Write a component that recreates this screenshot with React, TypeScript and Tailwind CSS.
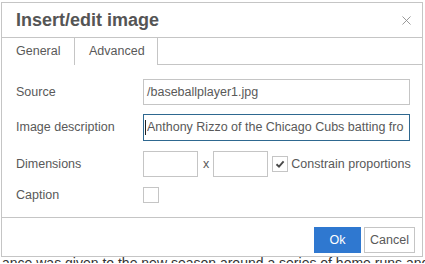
import { X } from "lucide-react";

const labelCls = "w-[127px] shrink-0 text-[12.5px] text-[#595959]";

function CheckBox({ checked }: { checked?: boolean }) {
  return (
    <div className="flex h-[16px] w-[16px] shrink-0 items-center justify-center border border-[#c5c5c5] bg-white">
      {checked && (
        <svg width="10" height="10" viewBox="0 0 10 10">
          <path d="M1.5 5.2 L4 7.6 L8.6 2.4" fill="none" stroke="#4a4a4a" strokeWidth="1.9" />
        </svg>
      )}
    </div>
  );
}

export default function App() {
  return (
    <div className="h-[264px] w-[425px] overflow-hidden bg-white font-['Liberation_Sans',Arial,sans-serif]">
      <div className="ml-[1px] mt-[2px] w-[422px] border border-[#c5c5c5] bg-white">
        {/* header */}
        <div className="flex h-[35px] items-center justify-between border-b border-[#c5c5c5] pl-[14px] pr-[8px]">
          <h1 className="text-[18px] font-bold text-[#555555]">Insert/edit image</h1>
          <X size={15} strokeWidth={1.4} className="text-[#8c8c8c]" />
        </div>

        {/* tabs */}
        <div className="flex h-[27px] text-[12.5px] text-[#595959]">
          <div className="flex w-[73px] items-center border-r border-[#c5c5c5] pl-[14px]">General</div>
          <div className="flex w-[83px] items-center border-r border-[#c5c5c5] pl-[14px]">Advanced</div>
          <div className="flex-1 border-b border-[#c5c5c5]" />
        </div>

        {/* form */}
        <div className="pl-[14px] pt-[14px]">
          <div className="flex h-[26px] items-center">
            <span className={labelCls}>Source</span>
            <div className="flex h-[26px] w-[267px] items-center border border-[#c5c5c5] pl-[3px] text-[12.5px] text-[#595959]">
              /baseballplayer1.jpg
            </div>
          </div>

          <div className="mt-[9px] flex h-[27px] items-center">
            <span className={labelCls}>Image description</span>
            <div className="flex h-[27px] w-[267px] items-center border border-[#2e6890] pl-[1px] pr-[5px] text-[12.5px] text-[#595959]">
              <span className="mr-[1px] h-[15px] w-[1px] shrink-0 bg-[#222]" />
              <span className="flex-1 overflow-hidden whitespace-nowrap">
                Anthony Rizzo of the Chicago Cubs batting from the left side
              </span>
            </div>
          </div>

          <div className="mt-[10px] flex h-[26px] items-center">
            <span className={labelCls}>Dimensions</span>
            <div className="h-[26px] w-[55px] border border-[#c5c5c5]" />
            <span className="ml-[5px] mr-[4px] text-[12.5px] text-[#595959]">x</span>
            <div className="h-[26px] w-[55px] border border-[#c5c5c5]" />
            <div className="ml-[4px]">
              <CheckBox checked />
            </div>
            <span className="ml-[3px] text-[12.5px] text-[#595959]">Constrain proportions</span>
          </div>

          <div className="mt-[10px] flex h-[16px] items-center">
            <span className={labelCls}>Caption</span>
            <CheckBox />
          </div>
        </div>

        {/* footer */}
        <div className="mt-[14px] flex justify-end gap-[3px] border-t border-[#c5c5c5] pb-[3px] pr-[7px] pt-[9px]">
          <button className="h-[26px] w-[47px] bg-[#2f78d0] text-[12.5px] text-white">Ok</button>
          <button className="h-[26px] w-[51px] border border-[#c5c5c5] bg-white text-[12.5px] text-[#595959]">
            Cancel
          </button>
        </div>
      </div>

      {/* page text behind the dialog, only the tops of its letters show */}
      <div className="h-[6px] overflow-hidden">
        <p className="-mt-[1px] whitespace-nowrap pl-[2px] text-[14px] leading-none text-[#333]">
          ance was given to the new season around a series of home runs and a run
        </p>
      </div>
    </div>
  );
}
